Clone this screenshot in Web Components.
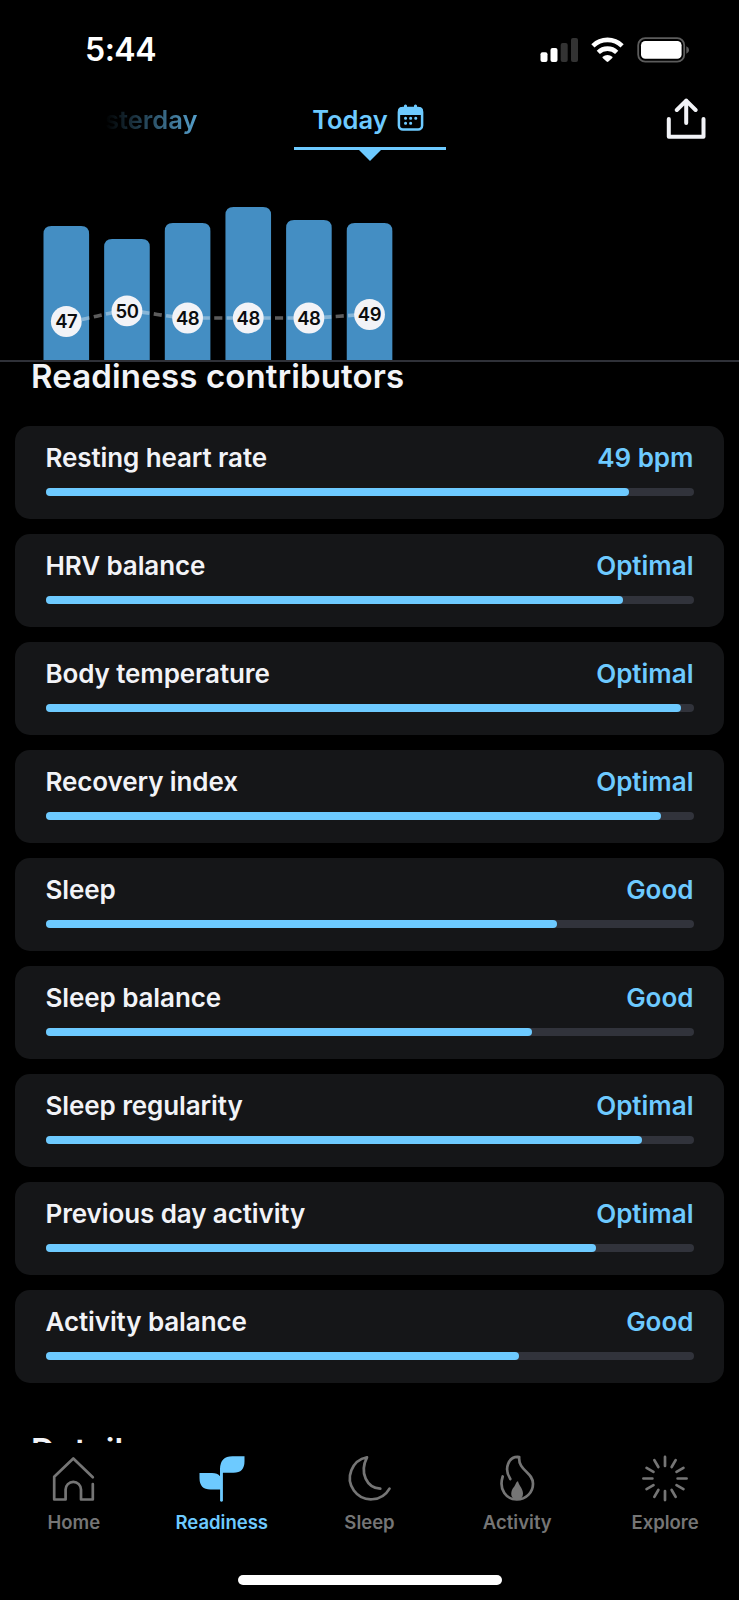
<!DOCTYPE html>
<html lang="en">
<head>
<meta charset="utf-8">
<title>Readiness</title>
<style>
    body {
        margin: 0;
        background: #000;
        font-family: Inter, "Liberation Sans", sans-serif;
    }
</style>
</head>
<body>
<readiness-app></readiness-app>

<script>
class StatusBar extends HTMLElement {
    constructor() {
        super();
        this.attachShadow({ mode: 'open' }).innerHTML = `
        <style>
            :host {
                display: flex;
                justify-content: space-between;
                align-items: center;
                height: 98px;
                box-sizing: border-box;
                padding: 1px 49px 0 85px;
                color: #fff;
            }
            time { font-size: 32px; font-weight: 600; line-height: 40px; letter-spacing: -0.5px; }
            svg { display: block; }
        </style>
        <time>5:44</time>
        <svg width="150" height="26" viewBox="540 36 150 26">
            <g fill="#fff">
                <rect x="540.5" y="51.3" width="7" height="9.6" rx="2"/>
                <rect x="550.5" y="47" width="7" height="13.9" rx="2"/>
            </g>
            <g fill="#333">
                <rect x="560.7" y="42" width="7" height="18.9" rx="2"/>
                <rect x="571" y="37" width="7" height="23.9" rx="2"/>
            </g>
            <g fill="none" stroke="#fff" stroke-width="4.6">
                <path d="M592.9 44.8a21 21 0 0 1 29.2 0"/>
                <path d="M598.3 51.3a13.3 13.3 0 0 1 18.4 0"/>
            </g>
            <path fill="#fff" d="M602.7 55.8a7.4 7.4 0 0 1 9.6 0q.6.6 0 1.2l-3.9 3.6q-.9.8-1.8 0l-3.9-3.6q-.6-.6 0-1.2z"/>
            <rect x="638.2" y="37.2" width="46" height="23.5" rx="7" fill="none" stroke="#5c5c5c" stroke-width="1.8"/>
            <rect x="641" y="40" width="40.6" height="17.8" rx="4.3" fill="#fff"/>
            <path fill="#5c5c5c" d="M686.3 45.2q2.8 1 2.8 3.8t-2.8 3.8z"/>
        </svg>`;
    }
}
customElements.define('status-bar', StatusBar);

class DayTabs extends HTMLElement {
    constructor() {
        super();
        this.attachShadow({ mode: 'open' }).innerHTML = `
        <style>
            :host {
                display: grid;
                grid-template-columns: 293.5px 152px 1fr;
                height: 82px;
                color: #6dcaff;
                font-size: 25.5px;
                font-weight: 600;
                line-height: 32px;
            }
            .yesterday {
                justify-self: end;
                margin-right: 96px;
                padding-top: 6px;
                background: linear-gradient(90deg, #000 25%, #5cacdb 105%);
                background-clip: text;
                -webkit-background-clip: text;
                color: transparent;
                height: 34px;
            }
            .today { position: relative; height: 49px; border-bottom: 3px solid #6dcaff; }
            .label { display: flex; justify-content: center; gap: 9px; padding: 6px 2px 0 0; }
            .today::after {
                content: "";
                position: absolute;
                left: 64px;
                top: 51px;
                border: solid transparent;
                border-width: 12px 12.5px 0;
                border-top-color: #6dcaff;
            }
            .share { justify-self: end; margin-right: 31px; }
            svg { display: block; }
        </style>
        <div class="yesterday">Yesterday</div>
        <div class="today">
            <div class="label"><span>Today</span>
                <svg width="28" height="28" viewBox="0 0 28 28">
                    <rect x="1.9" y="4" width="23.2" height="21.5" rx="4" fill="none" stroke="#6dcaff" stroke-width="2.5"/>
                    <path fill="#6dcaff" d="M1 11V7q0-4 4-4h17q4 0 4 4v4zM7 1.4q1.5-1.6 3 0V4H7zM17 1.4q1.5-1.6 3 0V4h-3z"/>
                    <path d="M8.5 14.3h.1m5 0h.1m5 0h.1M8.5 19.3h.1m5 0h.1" stroke="#6dcaff" stroke-width="3" stroke-linecap="round"/>
                </svg>
            </div>
        </div>
        <svg class="share" width="42" height="42" viewBox="666 98 42 42" fill="none" stroke="#f2f3f7" stroke-width="4" stroke-linecap="round" stroke-linejoin="round">
            <path d="M668.8 119v17.8h34.7V119M686.2 123v-22.5M676.8 110l9.4-9.4 9.4 9.4"/>
        </svg>`;
    }
}
customElements.define('day-tabs', DayTabs);

class HeartChart extends HTMLElement {
    connectedCallback() {
        // [top of the bar, centre of the badge, value]
        const days = [[226, 321.5, 47], [239, 310.9, 50], [223, 318, 48], [207, 318, 48], [220, 318, 48], [223, 314.5, 49]];
        const x = i => 66.3 + i * 60.65;
        const bars = days.map(([top], i) => `<path d="M${x(i) - 22.8} 361V${top + 8}q0-8 8-8h29.6q8 0 8 8V361z"/>`).join('');
        let line = `M${x(0)} ${days[0][1]}`;
        days.slice(1).forEach((d, i) => {
            line += `C${x(i) + 15} ${days[i][1]} ${x(i + 1) - 15} ${d[1]} ${x(i + 1)} ${d[1]}`;
        });
        const badges = days.map(([, y, value], i) => `
            <circle cx="${x(i)}" cy="${y}" r="15.4" fill="#f2f3f7"/>
            <text x="${x(i)}" y="${y + 6.9}">${value}</text>`).join('');

        this.attachShadow({ mode: 'open' }).innerHTML = `
        <style>
            :host { display: block; height: 180px; border-bottom: 2px solid #2f3138; }
            svg { display: block; }
            text { font-size: 18.5px; font-weight: 600; text-anchor: middle; letter-spacing: -0.4px; fill: #0b0c0e; }
        </style>
        <svg width="739" height="180" viewBox="0 180 739 180">
            <g fill="#448ec3">${bars}</g>
            <path d="${line}" fill="none" stroke="#fff" stroke-opacity=".36" stroke-width="3.6" stroke-dasharray="7.9 4.25" stroke-dashoffset="-3.7"/>
            ${badges}
        </svg>`;
    }
}
customElements.define('heart-chart', HeartChart);

class ContributorCard extends HTMLElement {
    connectedCallback() {
        this.attachShadow({ mode: 'open' }).innerHTML = `
        <style>
            :host {
                display: block;
                height: 93px;
                box-sizing: border-box;
                padding: 14px 30.5px 0;
                border-radius: 15px;
                background: #151618;
                color: #f2f3f7;
                font-size: 26px;
                font-weight: 600;
                line-height: 36px;
                letter-spacing: -0.1px;
            }
            .row { display: flex; justify-content: space-between; height: 48px; white-space: nowrap; }
            .value { color: #6dcaff; letter-spacing: 0; }
            .track { height: 8px; border-radius: 4px; background: #31333b; }
            .fill { height: 8px; border-radius: 4px; background: #6dcaff; width: ${this.getAttribute('level')}%; }
        </style>
        <div class="row"><slot></slot><span class="value">${this.getAttribute('value')}</span></div>
        <div class="track"><div class="fill"></div></div>`;
    }
}
customElements.define('contributor-card', ContributorCard);

class NavItem extends HTMLElement {
    connectedCallback() {
        this.attachShadow({ mode: 'open' }).innerHTML = `
        <style>
            :host {
                display: flex;
                flex-direction: column;
                align-items: center;
                gap: 7px;
                color: #757575;
                font-size: 18.5px;
                font-weight: 600;
                line-height: 26px;
            }
            :host([active]) { color: #6dcaff; }
        </style>
        <slot name="icon"></slot>
        <slot></slot>`;
    }
}
customElements.define('nav-item', NavItem);

class TabBar extends HTMLElement {
    constructor() {
        super();
        this.attachShadow({ mode: 'open' }).innerHTML = `
        <style>
            :host { display: block; height: 157px; background: #000; }
            nav { display: grid; grid-template-columns: repeat(5, 147.8px); padding-top: 11px; height: 121px; }
            svg { display: block; fill: none; stroke: currentColor; stroke-width: 2.7; stroke-linecap: round; stroke-linejoin: round; }
            .home { width: 264px; height: 10px; margin: 0 auto; border-radius: 5px; background: #fff; }
        </style>
        <nav>
            <nav-item>
                <svg slot="icon" width="48" height="48" viewBox="0.5 0 48 48"><path d="M43.3 23.3 23.8 4.5 4.700 22.700v22.800h11.400V35.600a7.700 7.700 0 0 1 15.400 0v9.900h11.800V30"/></svg>
                Home
            </nav-item>
            <nav-item active>
                <svg slot="icon" width="48" height="48" viewBox="0.5 0 48 48"><path fill="currentColor" stroke="none" d="M22.6 47V35.5H13Q2 35.5 2 24V19h12.5q5.5 0 8 3.3V15Q22.6 2.2 35 2.2h12v5Q47 18.7 36 18.7H25.4V47q-1.400 1.500-2.800 0z"/></svg>
                Readiness
            </nav-item>
            <nav-item>
                <svg slot="icon" width="48" height="48" viewBox="0 0 48 48"><path d="M22 3.300A21.200 21.200 0 1 0 44.500 34.600M22 3.300C14 19 22 34 35.300 34.700"/></svg>
                Sleep
            </nav-item>
            <nav-item>
                <svg slot="icon" width="48" height="48" viewBox="0 0 48 48"><path d="M9.700 22.500C5.500 36 13.500 45.500 23.800 45.500c9.200 0 16.200-7 16.200-15.800C40 18 25 16.500 26.200 3 15.500 2 10.500 14.500 17.300 25"/><path fill="currentColor" stroke="none" d="M25 27.200c1.200 4.800 5 7.300 5 12.300 0 3-1.500 5.500-4.500 6h-3.500c-5.500-2.500-4-9-1.500-12 2-2 2.500-6.300 4.500-6.300z"/></svg>
                Activity
            </nav-item>
            <nav-item>
                <svg slot="icon" width="48" height="48" viewBox="0 0 48 48"><path id="rays" d=""/></svg>
                Explore
            </nav-item>
        </nav>
        <div class="home"></div>`;

        // twelve rays around the centre
        let rays = '';
        for (let i = 0; i < 12; i++) {
            const a = i * Math.PI / 6;
            const inner = i % 3 ? 13.3 : 12.6;
            const outer = i % 3 ? 21.3 : 21.6;
            rays += `M${24 + inner * Math.cos(a)} ${24.5 + inner * Math.sin(a)}L${24 + outer * Math.cos(a)} ${24.5 + outer * Math.sin(a)}`;
        }
        this.shadowRoot.querySelector('#rays').setAttribute('d', rays);
    }
}
customElements.define('tab-bar', TabBar);

class ReadinessApp extends HTMLElement {
    constructor() {
        super();
        this.attachShadow({ mode: 'open' }).innerHTML = `
        <style>
            :host { display: flex; flex-direction: column; width: 739px; height: 1600px; overflow: hidden; background: #000; }
            main { height: 1081px; overflow: hidden; }
            h2 { margin: 0; padding-left: 31px; color: #f2f3f7; font-size: 33px; font-weight: 600; line-height: 40px; letter-spacing: 0.15px; white-space: nowrap; }
            .list { display: flex; flex-direction: column; gap: 15px; padding: 0 15px; margin: 36px 0 47px; }
            .top { line-height: 28px; }
        </style>
        <status-bar></status-bar>
        <day-tabs></day-tabs>
        <heart-chart></heart-chart>
        <main>
            <h2 class="top">Readiness contributors</h2>
            <div class="list">
                <contributor-card value="49 bpm" level="90">Resting heart rate</contributor-card>
                <contributor-card value="Optimal" level="89.1">HRV balance</contributor-card>
                <contributor-card value="Optimal" level="98">Body temperature</contributor-card>
                <contributor-card value="Optimal" level="95">Recovery index</contributor-card>
                <contributor-card value="Good" level="79">Sleep</contributor-card>
                <contributor-card value="Good" level="75">Sleep balance</contributor-card>
                <contributor-card value="Optimal" level="92">Sleep regularity</contributor-card>
                <contributor-card value="Optimal" level="85">Previous day activity</contributor-card>
                <contributor-card value="Good" level="73">Activity balance</contributor-card>
            </div>
            <h2>Details</h2>
        </main>
        <tab-bar></tab-bar>`;
    }
}
customElements.define('readiness-app', ReadinessApp);
</script>
</body>
</html>
